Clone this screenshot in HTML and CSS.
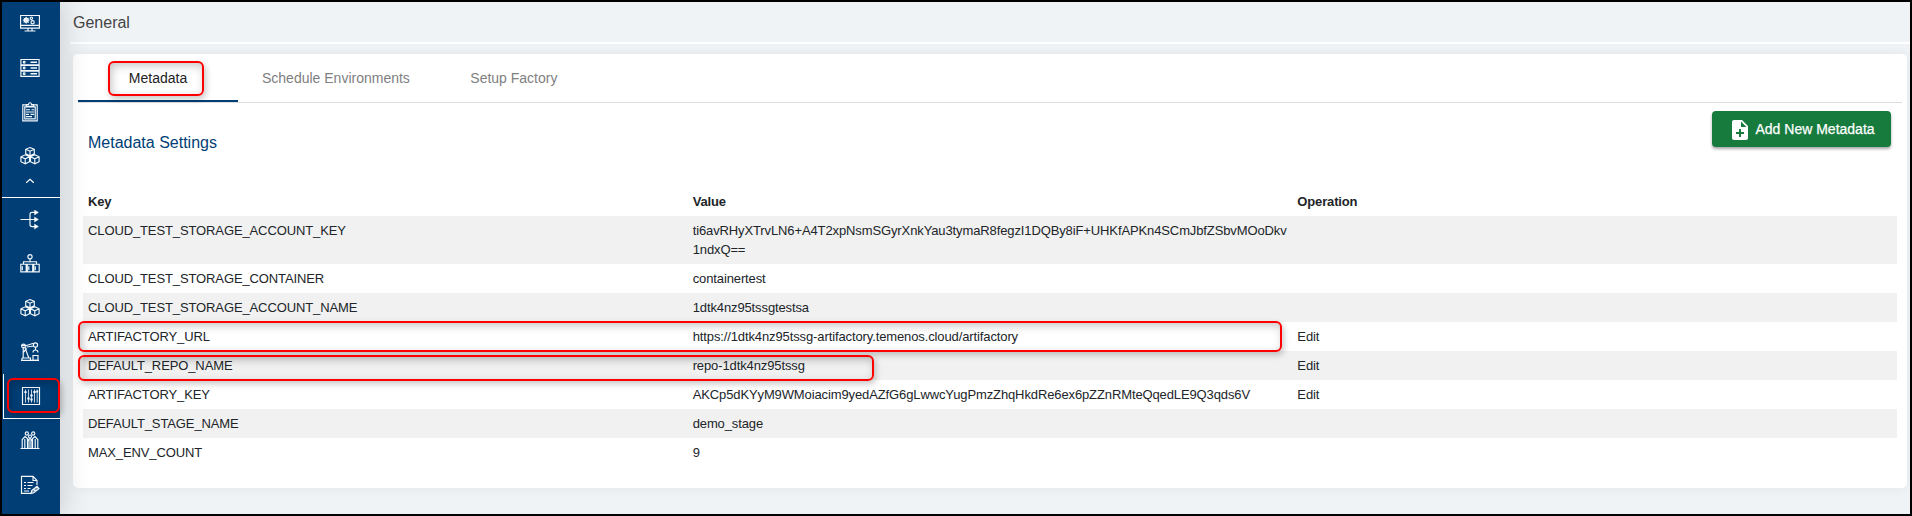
FILE: index.html
```html
<!DOCTYPE html>
<html lang="en">
<head>
<meta charset="utf-8">
<title>General</title>
<link rel="stylesheet" href="styles.css">
</head>
<body>
<div class="app">
  <nav class="sidebar">
    <a class="item"><svg class="icon" viewBox="0 0 20 20"><path d="M.6 1.500h18.800v12.600H.6zM.6 11.400h18.800M8 14v2.600M12 14v2.600M4.500 17h11"/><circle cx="6.200" cy="6.200" r="1.900" stroke-width="1.500"/><path d="M6.200 2.800v6.800M2.800 6.200h6.800M3.800 3.800l4.800 4.800M8.600 3.800L3.800 8.600" stroke-width="1"/><circle cx="11.400" cy="4.200" r="1.200"/><circle cx="12.600" cy="8.200" r="1.600"/></svg></a>
    <a class="item"><svg class="icon" viewBox="0 0 20 20"><path d="M.9 1.500h18.200v5.200H.9zM.9 7.300h18.200v5.200H.9zM.9 13.100h18.200v5.200H.9z"/><path d="M10.500 4.300h6.500M10.500 10h6.500M10.500 15.800h6.500" stroke-width="1.400"/><circle cx="4.200" cy="4.200" r=".9"/><circle cx="4.200" cy="10" r=".9"/><circle cx="4.200" cy="15.700" r=".9"/></svg></a>
    <a class="item"><svg class="icon" viewBox="0 0 20 20"><path d="M2.800 2.800h14.400v16H2.800zM4.800 4.800h10.400v12H4.800z"/><path d="M6.500 4.300V2.600h2q.2-1.900 1.500-1.900t1.500 1.900h2v1.700z" fill="#003e75"/><path d="M6 7.700h4M11.500 7.700h2.500M6 10h8M6 12.300h3M10.500 12.300H14M6 14.600h6"/></svg></a>
    <a class="item"><svg class="icon" viewBox="0 0 20 20"><path d="M10 1.500l4.300 1.800v4.500L10 9.800 5.700 7.800V3.300zM5.700 3.300L10 5.200l4.300-1.900M10 5.200v4.600M5.200 8.800l4.300 2v4.900l-4.300 2.100-4.300-2.100v-4.900zM.9 10.800l4.300 2 4.300-2M5.200 12.800v5M14.800 8.800l4.300 2v4.900l-4.300 2.100-4.300-2.100v-4.900zM10.500 10.800l4.300 2 4.300-2M14.800 12.800v5"/></svg></a>
    <a class="collapse"><svg class="chevron" viewBox="0 0 10 6"><path d="M1.200 4.700L5 1.300l3.800 3.400"/></svg></a>
    <div class="group">
      <a class="item"><svg class="icon" viewBox="0 0 20 20"><path d="M.5 9.500h15M15.300 2.400H12q-2 0-2 2v10.200q0 2 2 2h3.300" stroke-width="1.200"/><path d="M14.500 0l4 2.400-4 2.500zM14.500 7l4 2.500-4 2.500zM14.500 14.100l4 2.500-4 2.500z" fill="#fff" stroke-width=".4"/></svg></a>
      <a class="item"><svg class="icon" viewBox="0 0 20 20"><circle cx="10" cy="2.700" r="2.100"/><path d="M10 5v3.500M3.500 10V7.700h13V10"/><path d="M.8 10.200h5.400v7.600H.8zM7.300 10.200h5.400v7.600H7.300zM13.800 10.200h5.400v7.600h-5.400zM2.300 12.300v4M8.800 12.300v4M15.300 12.300v4"/></svg></a>
      <a class="item"><svg class="icon" viewBox="0 0 20 20"><path d="M10 1.500l4.300 1.800v4.500L10 9.800 5.700 7.800V3.300zM5.700 3.300L10 5.200l4.300-1.900M10 5.200v4.600M5.200 8.800l4.300 2v4.900l-4.300 2.100-4.300-2.100v-4.900zM.9 10.800l4.300 2 4.300-2M5.200 12.800v5M14.800 8.800l4.300 2v4.900l-4.300 2.100-4.300-2.100v-4.900zM10.500 10.800l4.300 2 4.300-2M14.800 12.800v5"/></svg></a>
      <a class="item"><svg class="icon" viewBox="0 0 20 20"><path d="M1 18.400h18M2 16h8.500v2.400M2 18.400V16M3.200 16V4.800M8.800 16L4.800 5M3.200 10.500l3.500-4M1.500 3.500h5l7-2.200M6.500 5l7.500-1"/><circle cx="3.500" cy="4" r="1.900"/><circle cx="15.500" cy="3" r="2.100"/><path d="M15.500 5v3M13 10.500q0-2.500 2.500-2.500t2.500 2.500M13 13.500h5v4.900h-5z"/></svg></a>
      <a class="item active"><svg class="icon" viewBox="0 0 20 20"><path d="M1.500 1.500h17v17h-17z"/><path d="M4.500 3.500v13M7.500 3.500v13M10.500 3.500v13M13.500 3.500v13M16.200 3.500v13" stroke-width=".8"/><path d="M3.300 6.200h2.400M6.300 12.500h2.400M9.300 9.500h2.400M12.300 6h2.400M15.200 5.500h2M9.300 13.500h2.400" stroke-width="1.800"/></svg></a>
      <a class="item"><svg class="icon" viewBox="0 0 20 20"><circle cx="6.800" cy="2.500" r="1.600"/><circle cx="13.200" cy="2.500" r="1.600"/><circle cx="10" cy="5.500" r="1.500"/><path d="M.5 17.500h19M2.200 17V8.500L5 5.500l2.500 2V17M12.500 17V7.500l2.500-2 2.800 3V17M4.800 8v9M15.200 8v9M7.500 9.500L10 7.500l2.500 2M9 9v8M11 9v8"/></svg></a>
      <a class="item"><svg class="icon" viewBox="0 0 20 20"><path d="M17 10V5.500L13 1.300H1.500v17h9.500M13 1.300v4.200h4"/><path d="M4 7.500h2M7.500 7.500h6M4 10.500h2M7.500 10.500h5M4 13.500h2M7.500 13.500h3M4 16h5"/><path d="M11 18.500l.7-3 5.300-4.200 2 2.300-5.200 4.200zM13.500 14l2 2.300" fill="#7795b4"/></svg></a>
    </div>
  </nav>

  <main class="content">
    <header class="page-title">General</header>
    <section class="card">
      <div class="tabs">
        <a class="tab selected">Metadata</a>
        <a class="tab">Schedule Environments</a>
        <a class="tab">Setup Factory</a>
      </div>
      <div class="toolbar">
        <h2 class="heading">Metadata Settings</h2>
        <button class="add"><svg class="add-icon" viewBox="0 0 24 24"><path d="M14 2H6c-1.100 0-1.990.9-1.990 2L4 20c0 1.100.89 2 1.990 2H18c1.100 0 2-.9 2-2V8l-6-6zm2 14h-3v3h-2v-3H8v-2h3v-3h2v3h3v2zm-3-7V3.500L18.500 9H13z"/></svg><span>Add New Metadata</span></button>
      </div>
      <div class="table">
        <div class="row head"><span>Key</span><span>Value</span><span>Operation</span></div>
        <div class="row"><span>CLOUD_TEST_STORAGE_ACCOUNT_KEY</span><span>ti6avRHyXTrvLN6+A4T2xpNsmSGyrXnkYau3tymaR8fegzI1DQBy8iF+UHKfAPKn4SCmJbfZSbvMOoDkv<br>1ndxQ==</span><span></span></div>
        <div class="row"><span>CLOUD_TEST_STORAGE_CONTAINER</span><span>containertest</span><span></span></div>
        <div class="row"><span>CLOUD_TEST_STORAGE_ACCOUNT_NAME</span><span>1dtk4nz95tssgtestsa</span><span></span></div>
        <div class="row"><span>ARTIFACTORY_URL</span><span>https://1dtk4nz95tssg-artifactory.temenos.cloud/artifactory</span><span>Edit</span></div>
        <div class="row"><span>DEFAULT_REPO_NAME</span><span>repo-1dtk4nz95tssg</span><span>Edit</span></div>
        <div class="row"><span>ARTIFACTORY_KEY</span><span>AKCp5dKYyM9WMoiacim9yedAZfG6gLwwcYugPmzZhqHkdRe6ex6pZZnRMteQqedLE9Q3qds6V</span><span>Edit</span></div>
        <div class="row"><span>DEFAULT_STAGE_NAME</span><span>demo_stage</span><span></span></div>
        <div class="row"><span>MAX_ENV_COUNT</span><span>9</span><span></span></div>
      </div>
    </section>
  </main>

  <div class="mark mark-tab"></div>
  <div class="mark mark-url"></div>
  <div class="mark mark-repo"></div>
  <div class="mark mark-nav"></div>
  <div class="frame"></div>
</div>
</body>
</html>
```
FILE: styles.css
```css
* { box-sizing: border-box; }
body { margin: 0; font-family: "Liberation Sans", Arial, sans-serif; }
.app { position: relative; display: flex; width: 1912px; height: 516px; padding: 2px; background: #eff3f6; overflow: hidden; }

/* Sidebar */
.sidebar { position: relative; z-index: 1; width: 58px; flex: none; display: flex; flex-direction: column; background: #003e75; box-shadow: 0 0 28px 4px rgba(0, 0, 0, .14); }
.item { display: flex; align-items: center; justify-content: center; height: 44px; flex: none; padding-right: 2px; }
.icon { width: 20px; height: 20px; fill: none; stroke: #f4f8fb; stroke-width: 1.15; }
.collapse { display: flex; justify-content: center; height: 19px; padding-right: 2px; }
.chevron { width: 10px; height: 6px; fill: none; stroke: #fff; stroke-width: 1.2; }
.group { border-top: 1px solid #fff; }
.group .item.active { margin-left: 1px; border-left: 1px solid #fff; border-bottom: 1px solid #fff; padding-right: 2px; height: 45px; }

/* Content */
.content { flex: 1; min-width: 0; padding: 0 3px 0 10px; }
.page-title { height: 42px; padding: 0 3px; line-height: 41px; font-size: 16px; color: #444; border-bottom: 2px solid #fff; margin-right: -3px; }
.card { margin: 10px 0 0 3px; height: 434px; padding: 0 5px; background: #fff; border-radius: 5px; box-shadow: 0 0 12px rgba(0, 0, 0, .06); }
.tabs { display: flex; height: 49px; border-bottom: 1px solid #dcdcdc; }
.tab { min-width: 160px; height: 48px; padding: 0 24px; line-height: 48px; text-align: center; font-size: 14px; color: #808080; }
.tab.selected { color: #222; border-bottom: 2px solid #003e75; }
.toolbar { display: flex; justify-content: space-between; align-items: flex-start; height: 84px; padding: 8px 11px 0 10px; }
.heading { margin: 21px 0 0; font-size: 16px; line-height: 22px; font-weight: 400; color: #003e75; }
.add { display: flex; align-items: center; gap: 3.5px; width: 179px; height: 36px; padding: 0 0 0 16px; border: 0; border-radius: 4px; background: #177b3e; color: #fff; font: 14px "Liberation Sans", Arial, sans-serif; -webkit-text-stroke: .25px #fff; box-shadow: 0 2px 3px rgba(0, 0, 0, .35); white-space: nowrap; }
.add-icon { width: 24px; height: 24px; margin-top: 2px; fill: #fff; }

/* Table */
.table { margin: 0 5px; font-size: 13px; line-height: 19px; letter-spacing: -.115px; color: #212529; }
.row { display: grid; grid-template-columns: repeat(3, minmax(0, 1fr)); padding: 5px 0; min-height: 29px; }
.row span { padding-left: 5px; white-space: nowrap; }
.row:nth-child(even) { background: #f1f1f1; }
.head { font-weight: 700; letter-spacing: -.15px; }

/* Highlight boxes drawn over the page */
.mark { position: absolute; z-index: 2; border: 2px solid #f00; border-radius: 6px; box-shadow: 2px 3px 6px rgba(0, 0, 0, .22), inset 2px 3px 9px rgba(0, 0, 0, .22); }
.mark-tab { left: 107.5px; top: 61px; width: 96px; height: 35px; }
.mark-url { left: 78px; top: 321px; width: 1204px; height: 31px; }
.mark-repo { left: 78px; top: 355px; width: 796px; height: 26px; }
.mark-nav { left: 7px; top: 378px; width: 53px; height: 35px; }
.frame { position: absolute; z-index: 3; inset: 0; border: 2px solid #000; }
```
